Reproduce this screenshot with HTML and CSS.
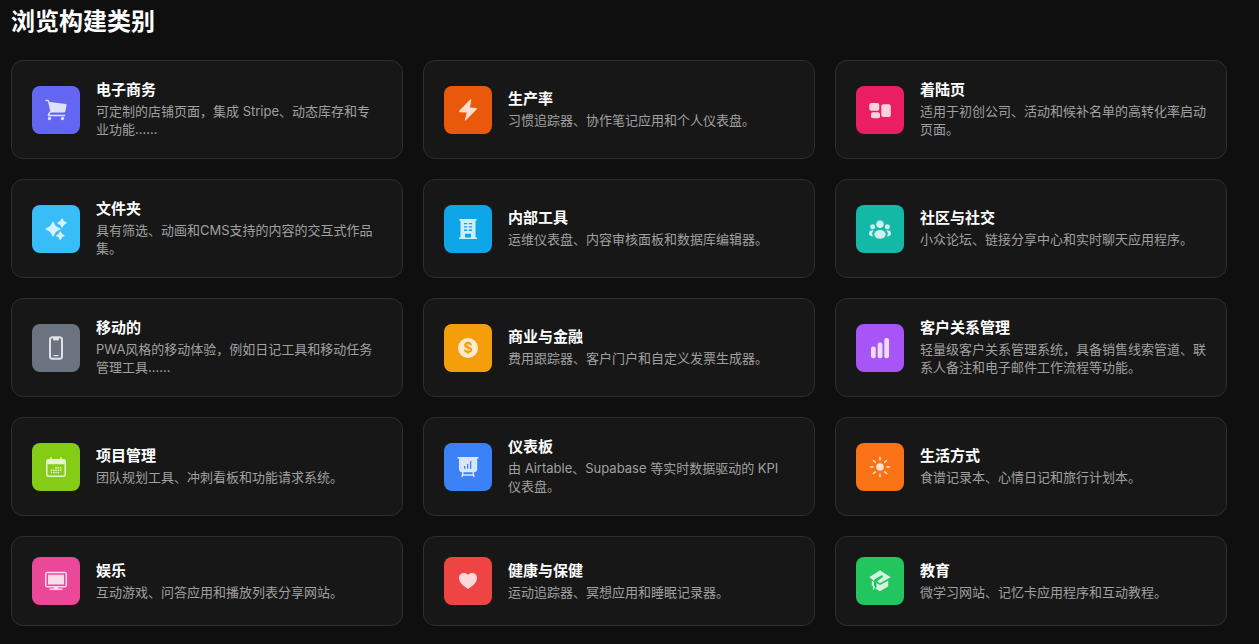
FILE: index.html
```html
<!DOCTYPE html>
<html lang="zh-CN">
<head>
    <meta charset="UTF-8">
    <meta name="viewport" content="width=device-width, initial-scale=1.0">
    <title>浏览构建类别</title>
    <link rel="stylesheet" href="styles.css">
</head>
<body>
    <main class="categories">
        <h1 class="page-title">浏览构建类别</h1>
        <div class="grid">
            <a class="card" href="#">
                <span class="icon indigo">
                    <svg viewBox="0 0 24 24"><path d="M1.5 1.7h2.300q.9 0 1.200.9l.5 1.500 16.300 2q1 .1.800 1.200l-1.300 6.200q-.2 1-1.200 1H6.500L4.400 5.200 3.800 3.300H1.500z"/><path d="M6.200 14l-1.700 2.700q-.3.800.6.800h15.500" fill="none" stroke="#fff" stroke-width="1.500" stroke-linecap="round"/><circle cx="5.500" cy="20.500" r="1.700"/><circle cx="18.500" cy="20.500" r="1.700"/></svg>
                </span>
                <span class="text">
                    <span class="name">电子商务</span>
                    <span class="desc">可定制的店铺页面，集成 Stripe、动态库存和专业功能……</span>
                </span>
            </a>
            <a class="card" href="#">
                <span class="icon deep-orange">
                    <svg viewBox="0 0 24 24"><path d="M14.300 1.500 3.200 12.700q-.8 1 .5 1.500l7 .2-1.900 7.600q0 1 .9.500L20.800 11.300q.7-1.100-.5-1.400l-6.300-.5 1.300-7.300q-.1-1.100-1-.6z"/></svg>
                </span>
                <span class="text">
                    <span class="name">生产率</span>
                    <span class="desc">习惯追踪器、协作笔记应用和个人仪表盘。</span>
                </span>
            </a>
            <a class="card" href="#">
                <span class="icon rose">
                    <svg viewBox="0 0 24 24"><rect x="1.300" y="5" width="10" height="7.700" rx="2"/><rect x="3" y="14.300" width="9" height="6" rx="2"/><rect x="13.300" y="6.300" width="9.500" height="12.700" rx="2"/></svg>
                </span>
                <span class="text">
                    <span class="name">着陆页</span>
                    <span class="desc">适用于初创公司、活动和候补名单的高转化率启动页面。</span>
                </span>
            </a>
            <a class="card" href="#">
                <span class="icon sky">
                    <svg viewBox="0 0 24 24"><path d="M9 4.500q.6 0 .9.900 1.300 4.400 5.700 5.700.9.300.9.900t-.9.900q-4.400 1.300-5.700 5.700-.3.900-.9.900t-.9-.9Q6.800 14.200 2.400 12.900q-.9-.3-.9-.9t.9-.9Q6.800 9.800 8.100 5.400q.3-.9.900-.9z"/><path d="M18 1.300q.5 0 .7.700.7 2.600 3.300 3.300.7.200.7.700t-.7.700q-2.600.7-3.300 3.300-.2.700-.7.700t-.7-.7q-.7-2.600-3.300-3.300-.7-.2-.7-.7t.7-.7q2.600-.7 3.300-3.300.2-.7.700-.7z"/><path d="M16.300 14.300q.5 0 .7.600.7 2.300 3 3 .6.200.6.700t-.6.700q-2.300.7-3 3-.2.600-.7.600t-.7-.6q-.7-2.300-3-3-.6-.2-.6-.7t.6-.7q2.300-.7 3-3 .2-.6.700-.6z"/></svg>
                </span>
                <span class="text">
                    <span class="name">文件夹</span>
                    <span class="desc">具有筛选、动画和CMS支持的内容的交互式作品集。</span>
                </span>
            </a>
            <a class="card" href="#">
                <span class="icon blue-sky">
                    <svg viewBox="0 0 24 24"><path fill-rule="evenodd" d="M3.300 2h17.400v1.500h-1.200v17h1.500V22H3v-1.500h1.500v-17H3.300zM8 6v1.300h3.200V6zm4.900 0v1.300h3.200V6zM8 9.300v1.300h3.200V9.300zm4.900 0v1.300h3.200V9.300zM8 12.600v1.300h3.200v-1.300zm4.900 0v1.300h3.200v-1.300zM9 16.700V20.500h6v-3.800z"/></svg>
                </span>
                <span class="text">
                    <span class="name">内部工具</span>
                    <span class="desc">运维仪表盘、内容审核面板和数据库编辑器。</span>
                </span>
            </a>
            <a class="card" href="#">
                <span class="icon teal">
                    <svg viewBox="0 0 24 24"><circle cx="12" cy="7.200" r="3.700"/><circle cx="4.700" cy="9.700" r="2.500"/><circle cx="19.300" cy="9.700" r="2.500"/><ellipse cx="12" cy="17.300" rx="5.700" ry="4.400"/><path d="M5.700 13.300q-2.600 3-.7 6.200-4-.4-4-3 0-3.500 4.700-3.200zM18.300 13.300q2.600 3 .7 6.200 4-.4 4-3 0-3.500-4.700-3.200z"/></svg>
                </span>
                <span class="text">
                    <span class="name">社区与社交</span>
                    <span class="desc">小众论坛、链接分享中心和实时聊天应用程序。</span>
                </span>
            </a>
            <a class="card" href="#">
                <span class="icon gray">
                    <svg viewBox="0 0 24 24"><rect x="6" y="1.300" width="12" height="21.400" rx="2.500" fill="none" stroke="#fff" stroke-width="2"/><path d="M9 2h6v1q0 1.500-1.500 1.500h-3Q9 4.500 9 3zM9.500 19h5v1.200h-5z"/></svg>
                </span>
                <span class="text">
                    <span class="name">移动的</span>
                    <span class="desc">PWA风格的移动体验，例如日记工具和移动任务管理工具……</span>
                </span>
            </a>
            <a class="card" href="#">
                <span class="icon amber">
                    <svg viewBox="0 0 24 24"><circle cx="12" cy="12" r="10"/><text class="coin" x="12" y="17" text-anchor="middle">$</text></svg>
                </span>
                <span class="text">
                    <span class="name">商业与金融</span>
                    <span class="desc">费用跟踪器、客户门户和自定义发票生成器。</span>
                </span>
            </a>
            <a class="card" href="#">
                <span class="icon purple">
                    <svg viewBox="0 0 24 24"><rect x="3" y="10.500" width="4.700" height="11.800" rx="2"/><rect x="9.700" y="6.500" width="4.700" height="15.800" rx="2"/><rect x="16.300" y="2" width="4.700" height="20.300" rx="2"/></svg>
                </span>
                <span class="text">
                    <span class="name">客户关系管理</span>
                    <span class="desc">轻量级客户关系管理系统，具备销售线索管道、联系人备注和电子邮件工作流程等功能。</span>
                </span>
            </a>
            <a class="card" href="#">
                <span class="icon lime">
                    <svg viewBox="0 0 24 24"><path fill-rule="evenodd" d="M6.300 2h1.400v2h8.600V2h1.400v2H19q3 0 3 3v12q0 3-3 3H5q-3 0-3-3V7q0-3 3-3h1.300zM3.500 9.300V19q0 1.500 1.500 1.500h14q1.500 0 1.500-1.500V9.300z"/><path d="M11.300 12.800h6.900M6.700 15.200h11.500M6.700 17.600h9.200" fill="none" stroke="#fff" stroke-width="1.500" stroke-dasharray="1.500 .8"/></svg>
                </span>
                <span class="text">
                    <span class="name">项目管理</span>
                    <span class="desc">团队规划工具、冲刺看板和功能请求系统。</span>
                </span>
            </a>
            <a class="card" href="#">
                <span class="icon blue">
                    <svg viewBox="0 0 24 24"><path fill-rule="evenodd" d="M1.500 2h21v1.500h-1.300V14q0 3.300-3.300 3.300H6.300Q3 17.300 3 14V3.500H1.500zM8 11v2.800h1.300V11zm3-2v4.800h1.300V9zm3-3v7.800h1.300V6z"/><path d="M7 17l-1 5M17 17l1 5M6.500 20h11" fill="none" stroke="#fff" stroke-width="1.500"/></svg>
                </span>
                <span class="text">
                    <span class="name">仪表板</span>
                    <span class="desc">由 Airtable、Supabase 等实时数据驱动的 KPI 仪表盘。</span>
                </span>
            </a>
            <a class="card" href="#">
                <span class="icon orange">
                    <svg viewBox="0 0 24 24"><circle cx="12" cy="12" r="3.800"/><path d="M12 2.500v2.500M12 19v2.500M2.500 12H5M19 12h2.500M5.500 5.500l1.800 1.800M16.700 16.700l1.800 1.800M5.500 18.500l1.800-1.800M16.700 7.300l1.800-1.800" fill="none" stroke="#fff" stroke-width="1.500" stroke-linecap="round"/></svg>
                </span>
                <span class="text">
                    <span class="name">生活方式</span>
                    <span class="desc">食谱记录本、心情日记和旅行计划本。</span>
                </span>
            </a>
            <a class="card" href="#">
                <span class="icon pink">
                    <svg viewBox="0 0 24 24"><rect x="1.700" y="3.600" width="20.600" height="14.200" rx="1.500" fill="none" stroke="#fff" stroke-width="1.500"/><path d="M4 5.800h16v9.700H4zM10 18h4v1.500h4.500V21h-13v-1.500H10z"/></svg>
                </span>
                <span class="text">
                    <span class="name">娱乐</span>
                    <span class="desc">互动游戏、问答应用和播放列表分享网站。</span>
                </span>
            </a>
            <a class="card" href="#">
                <span class="icon red">
                    <svg viewBox="0 0 24 24"><path d="M12 20Q3 14.500 3 9.300C3 4 9 2.500 12 6c3-3.500 9-2 9 3.300Q21 14.500 12 20z"/></svg>
                </span>
                <span class="text">
                    <span class="name">健康与保健</span>
                    <span class="desc">运动追踪器、冥想应用和睡眠记录器。</span>
                </span>
            </a>
            <a class="card" href="#">
                <span class="icon green">
                    <svg viewBox="0 0 24 24"><path d="M12 1.300 22.700 8.300 13 13.800q-1 .4-2 0l-1.700-1q.4-1.300 1.700-2.100l3.300-2.200q1-.8.500-1.700-.6-.8-1.700-.2L8 9.500q-1.500 1-2.200 2.300L1.300 8.300z"/><path d="M8.500 14l2.500 1.500q1 .5 2 0l7.200-4.100v6L12 22.300l-4.700-2.700 1.300-1.200z"/><path d="M3.800 11.500l2 1.300v3.700l1.300 1.300-1.200 3-1.200-.5.600-2.500-1.500-1.200z"/></svg>
                </span>
                <span class="text">
                    <span class="name">教育</span>
                    <span class="desc">微学习网站、记忆卡应用程序和互动教程。</span>
                </span>
            </a>
        </div>
    </main>
</body>
</html>
```
FILE: styles.css
```css
* {
    box-sizing: border-box;
}
body {
    margin: 0;
    background-color: #0f0f0f;
    color: #fff;
    font-family: Inter, "Noto Sans CJK SC", sans-serif;
}
.categories {
    padding: 8px 32px 16px 11px;
}
.page-title {
    margin: 0 0 24px;
    font-size: 24px;
    line-height: 28px;
    font-weight: 700;
}
.grid {
    display: grid;
    grid-template-columns: repeat(3, 1fr);
    gap: 20px;
}
.card {
    display: flex;
    align-items: center;
    gap: 16px;
    padding: 20px;
    background-color: #171717;
    border: 1px solid #2e2e2e;
    border-radius: 12px;
    color: inherit;
    text-decoration: none;
}
.card:hover {
    border-color: #444;
}
.icon {
    display: flex;
    align-items: center;
    justify-content: center;
    flex-shrink: 0;
    width: 48px;
    height: 48px;
    border-radius: 8px;
}
.icon svg {
    width: 24px;
    height: 24px;
    fill: #fff;
    opacity: 0.8;
}
.icon .coin {
    fill: #f59e0b;
    font-size: 14px;
    font-weight: 700;
}
.text {
    flex: 1;
    min-width: 0;
}
.name {
    display: block;
    margin-bottom: 4px;
    font-size: 15px;
    line-height: 17px;
    font-weight: 700;
}
.desc {
    display: block;
    color: #a0a0a0;
    font-size: 13px;
    line-height: 18px;
}
.indigo {
    background-color: #6366f1;
}
.deep-orange {
    background-color: #ea580c;
}
.rose {
    background-color: #e91e63;
}
.sky {
    background-color: #38bdf8;
}
.blue-sky {
    background-color: #0ea5e9;
}
.teal {
    background-color: #14b8a6;
}
.gray {
    background-color: #6b7280;
}
.amber {
    background-color: #f59e0b;
}
.purple {
    background-color: #a855f7;
}
.lime {
    background-color: #84cc16;
}
.blue {
    background-color: #3b82f6;
}
.orange {
    background-color: #f97316;
}
.pink {
    background-color: #ec4899;
}
.red {
    background-color: #ef4444;
}
.green {
    background-color: #22c55e;
}
@media (max-width: 900px) {
    .grid {
        grid-template-columns: repeat(2, 1fr);
    }
}
@media (max-width: 600px) {
    .grid {
        grid-template-columns: 1fr;
    }
}
```
